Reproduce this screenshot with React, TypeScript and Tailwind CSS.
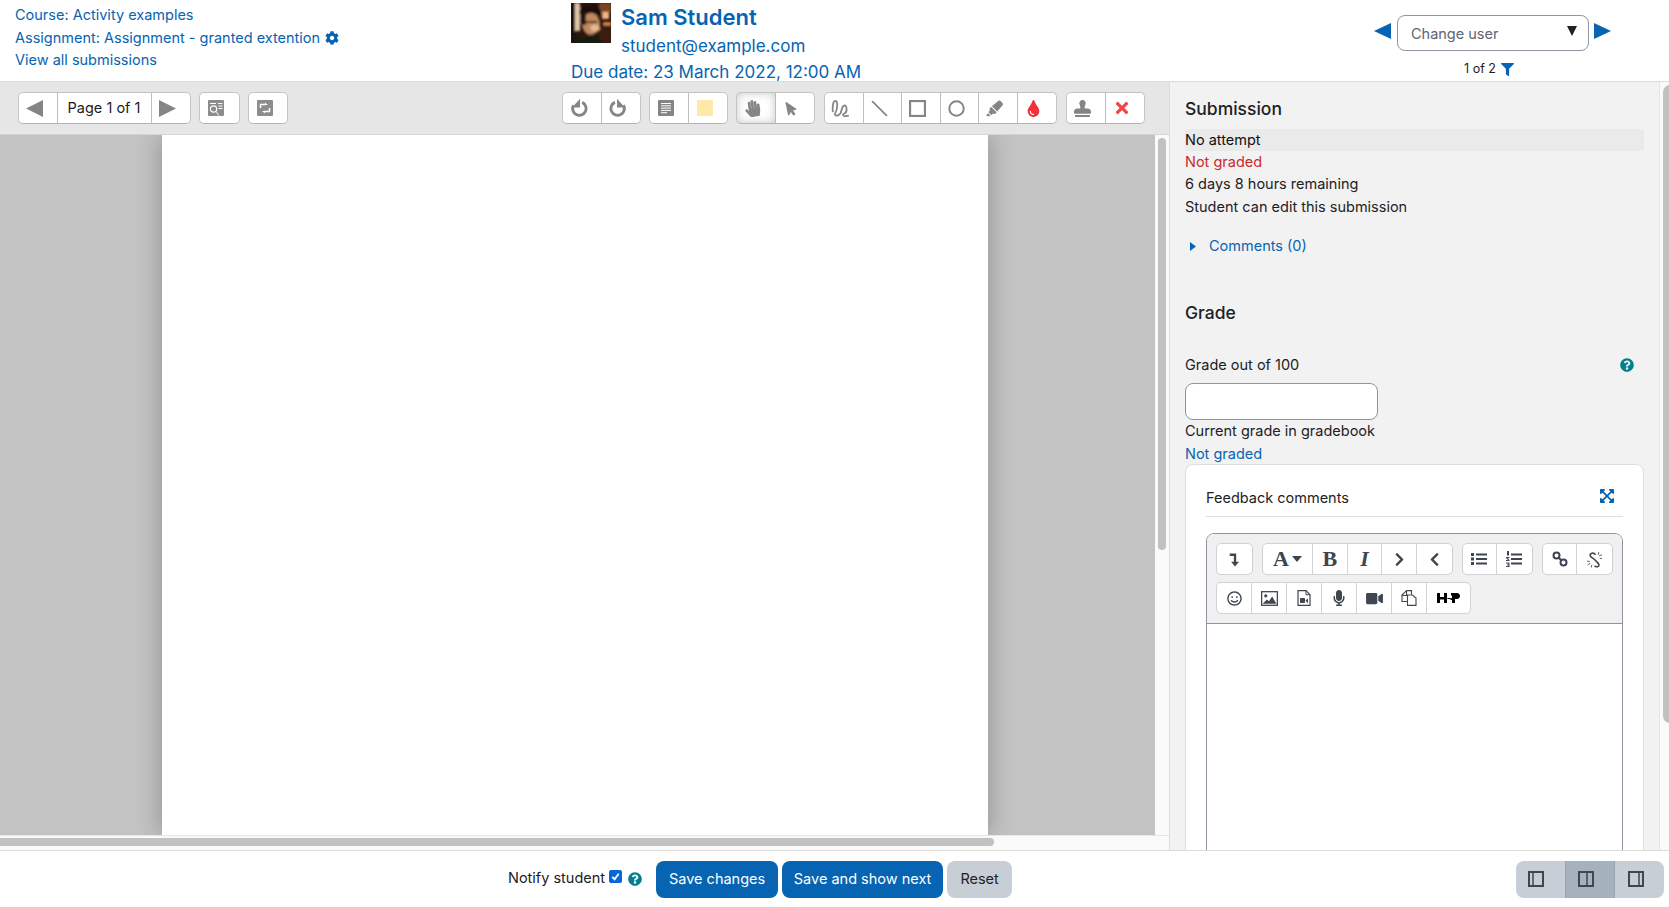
import React from "react";
import {
  FaCog,
  FaQuestionCircle,
  FaFilter,
  FaHandPaper,
  FaMousePointer,
  FaHighlighter,
  FaTint,
  FaStamp,
  FaTimes,
  FaExpandArrowsAlt,
  FaRegSmile,
  FaMicrophone,
  FaVideo,
  FaChevronRight,
  FaChevronLeft,
} from "react-icons/fa";

const font = "font-['Inter','Liberation_Sans',sans-serif]";

function Tri({ dir, className }: { dir: "l" | "r"; className: string }) {
  return (
    <svg viewBox="0 0 16 16" preserveAspectRatio="none" className={className} fill="currentColor">
      <polygon points={dir === "l" ? "16,0 16,16 0,8" : "0,0 0,16 16,8"} />
    </svg>
  );
}

function Avatar() {
  return (
    <svg viewBox="0 0 40 40" className="w-10 h-10 shrink-0">
      <defs>
        <filter id="av-blur">
          <feGaussianBlur stdDeviation="0.8" />
        </filter>
      </defs>
      <rect width="40" height="40" fill="#2a1610" />
      <g filter="url(#av-blur)">
        <rect x="0" y="0" width="4" height="40" fill="#1a0e0c" />
        <rect x="4" y="0" width="5" height="28" fill="#e0c8a8" />
        <rect x="28" y="0" width="12" height="9" fill="#7a4424" />
        <rect x="31" y="9" width="7" height="7" fill="#f4b488" />
        <rect x="32" y="19" width="8" height="4" fill="#d08040" />
        <rect x="28" y="25" width="12" height="15" fill="#3a1a10" />
        <ellipse cx="19" cy="9" rx="11" ry="7" fill="#1c1008" />
        <ellipse cx="20" cy="21" rx="9" ry="11" fill="#c08a60" />
        <rect x="10" y="10" width="5" height="12" fill="#241408" />
        <ellipse cx="24" cy="25" rx="5" ry="3.500" fill="#e4b890" />
        <rect x="15" y="18" width="11" height="2" fill="#4a2c18" />
        <ellipse cx="17" cy="41" rx="15" ry="8" fill="#141a10" />
      </g>
    </svg>
  );
}

function PdfGroup({ children, className = "" }: { children: React.ReactNode; className?: string }) {
  return (
    <div className={`flex h-8 rounded-[5px] bg-white border border-[#c4c4c4] border-b-[#b4b4b4] divide-x divide-[#bdbdbd] overflow-hidden ${className}`}>
      {children}
    </div>
  );
}

function PdfBtn({ children, className = "" }: { children: React.ReactNode; className?: string }) {
  return <div className={`w-[38.5px] pr-[6px] flex items-center justify-center text-[#858585] ${className}`}>{children}</div>;
}

function Stroke({ children, size = "w-[17px] h-[17px]" }: { children: React.ReactNode; size?: string }) {
  return (
    <svg viewBox="0 0 16 16" className={`${size} shrink-0`} fill="none" stroke="currentColor" strokeWidth="1.7">
      {children}
    </svg>
  );
}

function PdfToolbar() {
  return (
    <div className="h-[53px] flex items-center bg-[#e6e6e6] border-b border-[#d4d4d4] shrink-0">
      <PdfGroup className="ml-[18px]">
        <PdfBtn>
          <Tri dir="l" className="w-[17px] h-[17px]" />
        </PdfBtn>
        <div className="w-[94px] flex items-center justify-center text-[14.5px] text-[#1d2125]">Page 1 of 1</div>
        <PdfBtn>
          <Tri dir="r" className="w-[17px] h-[17px]" />
        </PdfBtn>
      </PdfGroup>
      <PdfGroup className="ml-2">
        <PdfBtn>
          <svg viewBox="0 0 16 16" className="w-4 h-4 shrink-0">
            <rect width="16" height="16" rx="1" fill="#8c8c8c" />
            <circle cx="5.500" cy="9" r="3.200" fill="none" stroke="#fff" strokeWidth="1.200" />
            <path d="M8 11.500l3 4M10 3.500h4.500M10.500 6h4M10.500 8.500h4M2 3.500h6" stroke="#fff" strokeWidth="1" />
          </svg>
        </PdfBtn>
      </PdfGroup>
      <PdfGroup className="ml-2">
        <PdfBtn>
          <svg viewBox="0 0 16 16" className="w-4 h-4 shrink-0">
            <rect width="16" height="16" rx="1" fill="#8c8c8c" />
            <path d="M3.500 8V4.500h5M12.500 8v3.500h-5" fill="none" stroke="#fff" strokeWidth="1.500" />
            <path d="M8 2.500L11 5H8zM8 13.500L5 11h3z" fill="#fff" />
          </svg>
        </PdfBtn>
      </PdfGroup>

      <PdfGroup className="ml-[274px]">
        <PdfBtn>
          <Stroke size="w-[20px] h-[20px]">
            <path d="M10.500 3.500A5.400 5.400 0 1 1 3.600 5.800" strokeWidth="2.300" />
            <path d="M8.800 0.500v7H2.500z" fill="currentColor" stroke="none" />
          </Stroke>
        </PdfBtn>
        <PdfBtn>
          <Stroke size="w-[20px] h-[20px]">
            <path d="M5.500 3.500A5.400 5.400 0 1 0 12.400 5.800" strokeWidth="2.300" />
            <path d="M7.200 0.500v7h6.300z" fill="currentColor" stroke="none" />
          </Stroke>
        </PdfBtn>
      </PdfGroup>
      <PdfGroup className="ml-2">
        <PdfBtn>
          <svg viewBox="0 0 16 16" className="w-4 h-4 shrink-0">
            <rect width="16" height="16" rx="1" fill="#858585" />
            <path d="M3 3.500h10M3 5.800h10M3 8.100h10M3 10.400h10M3 12.700h6" stroke="#fff" strokeWidth="1" />
          </svg>
        </PdfBtn>
        <PdfBtn>
          <span className="w-4 h-4 shrink-0 bg-[#ffe7a8]" />
        </PdfBtn>
      </PdfGroup>
      <PdfGroup className="ml-2">
        <PdfBtn className="shadow-[inset_0_0_10px_rgba(0,0,0,0.22)]">
          <FaHandPaper className="w-[17px] h-[17px] shrink-0 rotate-[-8deg]" />
        </PdfBtn>
        <PdfBtn>
          <FaMousePointer className="w-[15px] h-[15px] shrink-0 -rotate-12" />
        </PdfBtn>
      </PdfGroup>
      <PdfGroup className="ml-[9px]">
        <PdfBtn>
          <Stroke size="w-[19px] h-[19px]">
            <path d="M1.500 11C1 5 2 1.500 3.800 1.500 6 1.500 5.500 9 3.500 12 2.500 14.500 6 15 8 12 9 10 9 6 11 5.500 13.500 5 14 11 11.500 12 9.500 13 9.500 14.500 12 14.500L15 14" strokeWidth="1.500" />
          </Stroke>
        </PdfBtn>
        <PdfBtn>
          <Stroke>
            <path d="M1 1l14 14" strokeWidth="1.600" />
          </Stroke>
        </PdfBtn>
        <PdfBtn>
          <Stroke>
            <rect x="1" y="1" width="14" height="14" strokeWidth="2" />
          </Stroke>
        </PdfBtn>
        <PdfBtn>
          <Stroke>
            <circle cx="8" cy="8" r="6.800" strokeWidth="1.900" />
          </Stroke>
        </PdfBtn>
        <PdfBtn>
          <FaHighlighter className="w-[17px] h-[17px] shrink-0" />
        </PdfBtn>
        <PdfBtn>
          <FaTint className="w-[17px] h-[17px] shrink-0 text-[#f0323c]" />
        </PdfBtn>
      </PdfGroup>
      <PdfGroup className="ml-[9px]">
        <PdfBtn>
          <FaStamp className="w-[17px] h-[17px] shrink-0" />
        </PdfBtn>
        <PdfBtn>
          <FaTimes className="w-[18px] h-[18px] shrink-0 text-[#f04646]" />
        </PdfBtn>
      </PdfGroup>
    </div>
  );
}

function AttoGroup({ children, className = "" }: { children: React.ReactNode; className?: string }) {
  return (
    <div className={`flex h-8 rounded-[5px] bg-white border border-[#d2d2d2] divide-x divide-[#d2d2d2] overflow-hidden ${className}`}>
      {children}
    </div>
  );
}

function AttoBtn({ children, className = "w-[35px]" }: { children: React.ReactNode; className?: string }) {
  return <div className={`flex items-center justify-center text-[#3f4650] ${className}`}>{children}</div>;
}

function EditorToolbar() {
  return (
    <div className="h-[90px] bg-[#f0f0f0] border-b border-[#8f959e] px-[9px] pt-[9px] rounded-t-[7px] shrink-0">
      <div className="flex">
        <AttoGroup>
          <AttoBtn>
            <svg viewBox="0 0 16 16" className="w-[17px] h-[17px]" fill="none" stroke="currentColor" strokeWidth="2.200">
              <path d="M3.500 3.500h5v8" />
              <path d="M4.800 10h7.400l-3.700 4.500z" fill="currentColor" stroke="none" />
            </svg>
          </AttoBtn>
        </AttoGroup>
        <AttoGroup className="ml-[9px]">
          <AttoBtn className="w-[51px]">
            <span className="font-['Liberation_Serif',serif] font-bold text-[22px] leading-none">A</span>
            <svg viewBox="0 0 10 6" className="w-[10px] h-[6px] ml-[3px]" fill="currentColor">
              <polygon points="0,0 10,0 5,6" />
            </svg>
          </AttoBtn>
          <AttoBtn>
            <span className="font-['Liberation_Serif',serif] font-bold text-[22px] leading-none">B</span>
          </AttoBtn>
          <AttoBtn>
            <span className="font-['Liberation_Serif',serif] font-bold italic text-[22px] leading-none">I</span>
          </AttoBtn>
          <AttoBtn>
            <FaChevronRight className="w-[15px] h-[15px]" />
          </AttoBtn>
          <AttoBtn>
            <FaChevronLeft className="w-[15px] h-[15px]" />
          </AttoBtn>
        </AttoGroup>
        <AttoGroup className="ml-[9px]">
          <AttoBtn>
            <svg viewBox="0 0 16 16" className="w-4 h-4" fill="currentColor">
              <path d="M5 2.500h11v2H5zM5 7h11v2H5zM5 11.500h11v2H5zM0 2h3v3H0zM0 6.500h3v3H0zM0 11h3v3H0z" />
            </svg>
          </AttoBtn>
          <AttoBtn>
            <svg viewBox="0 0 16 16" className="w-4 h-4" fill="currentColor">
              <path d="M5 2.500h11v2H5zM5 7h11v2H5zM5 11.500h11v2H5zM1 0h2v4.500H1zM0 6h3.500v1H1.800l1.700 2v1H0V9h2L0 7zM0 11.500h3.500V16H0v-1h2.300v-.7H1v-.8h1.300v-.9H0z" />
            </svg>
          </AttoBtn>
        </AttoGroup>
        <AttoGroup className="ml-[9px]">
          <AttoBtn>
            <svg viewBox="0 0 16 16" className="w-4 h-4" fill="none" stroke="currentColor" strokeWidth="2">
              <circle cx="4.500" cy="4.500" r="3" />
              <circle cx="11.500" cy="11.500" r="3" />
              <path d="M6.500 6.500l3 3" />
            </svg>
          </AttoBtn>
          <AttoBtn>
            <svg viewBox="0 0 16 16" className="w-[17px] h-[17px]" fill="none" stroke="currentColor" strokeWidth="1.500">
              <path d="M9 3.500C7 1 3.500 2 4 4.500c.3 1.500 3 2 4.500 4s4.500 3 3.500 5.500c-1 1.500-3 .8-4 0" />
              <path d="M12 1l-.5 2.500M15 3.500l-2.500 1M15 7h-2M1 9.500l2.500.5M1.500 13L4 11.500M5 15.500l.5-2.500" strokeWidth="0.800" />
            </svg>
          </AttoBtn>
        </AttoGroup>
      </div>
      <div className="flex mt-[7px]">
        <AttoGroup>
          <AttoBtn>
            <FaRegSmile className="w-[15px] h-[15px]" />
          </AttoBtn>
          <AttoBtn>
            <svg viewBox="0 0 16 14" className="w-[17px] h-[15px]">
              <rect x="0.600" y="0.600" width="14.800" height="12.800" fill="none" stroke="currentColor" strokeWidth="1.200" />
              <circle cx="4.500" cy="4.500" r="1.500" fill="currentColor" />
              <path d="M1.500 12l4-4 2 1.500 3-4.500 4 7z" fill="currentColor" />
            </svg>
          </AttoBtn>
          <AttoBtn>
            <svg viewBox="0 0 14 16" className="w-[14px] h-4">
              <path d="M1 .700h8l4 4v10.600H1z" fill="none" stroke="currentColor" strokeWidth="1.200" />
              <path d="M9 .700v4h4" fill="none" stroke="currentColor" strokeWidth="1" />
              <rect x="3" y="8" width="5" height="5" rx="0.800" fill="currentColor" />
              <path d="M8.500 10.500l2.500-2v5z" fill="currentColor" />
            </svg>
          </AttoBtn>
          <AttoBtn>
            <FaMicrophone className="w-[14px] h-[16px]" />
          </AttoBtn>
          <AttoBtn>
            <FaVideo className="w-[17px] h-[15px]" />
          </AttoBtn>
          <AttoBtn>
            <svg viewBox="0 0 16 16" className="w-4 h-4" fill="none" stroke="currentColor" strokeWidth="1.100">
              <path d="M5.500 0.600h5v4" />
              <path d="M5.500 0.600L1 5v6.500h5.500" />
              <path d="M1 5.500h4.500v-5" />
              <path d="M6.500 5h5l3.500 3v7.400H6.500z" fill="#fff" />
            </svg>
          </AttoBtn>
          <AttoBtn className="w-[43px]">
            <svg viewBox="0 0 24 12" className="w-6 h-3 text-black" fill="currentColor">
              <path d="M0 1h3v4h4V1h3v10H7V7.500H3V11H0zM14 1h6c4 0 4 6 0 6h-2v4h-3V8h-1.500l-.5-1.500 2-.5V3.500H14z" />
              <path d="M10.500 6h3v1h-3z" />
            </svg>
          </AttoBtn>
        </AttoGroup>
      </div>
    </div>
  );
}

function GradePanel() {
  return (
    <div className="flex-1 min-w-0 bg-[#f2f2f2] overflow-hidden pl-[15px] pr-[15px] pt-[16px] text-[14.5px] leading-[22.5px] text-[#1d2125]">
      <h3 className="text-[17.5px] leading-[22.5px] font-medium">Submission</h3>
      <div className="mt-[8px] bg-[#eaeaea] h-[22px] text-[#111]">No attempt</div>
      <div className="text-[#ca2b2b]">Not graded</div>
      <div>6 days 8 hours remaining</div>
      <div>Student can edit this submission</div>
      <div className="mt-[17px] flex items-center h-[22px] text-[#0664b3]">
        <Tri dir="r" className="w-[6px] h-[9px] ml-[5px]" />
        <span className="ml-[13px]">Comments (0)</span>
      </div>
      <h3 className="mt-[45px] text-[17.5px] leading-[22.5px] font-medium">Grade</h3>
      <div className="mt-[29px] flex items-center justify-between pr-[10px]">
        <span>Grade out of 100</span>
        <FaQuestionCircle className="w-[14px] h-[14px] text-[#007f8c]" />
      </div>
      <div className="mt-[7px] w-[193px] h-[37px] bg-white border border-[#8f959e] rounded-lg" />
      <div>Current grade in gradebook</div>
      <div className="leading-[21.5px] text-[#0664b3]">Not graded</div>
      <div className="bg-white border border-[#dedede] rounded-lg h-[420px] px-5">
        <div className="h-[52px] border-b border-[#dedede] flex items-center justify-between pr-[8px] pt-[15px]">
          <span>Feedback comments</span>
          <FaExpandArrowsAlt className="w-4 h-4 -mt-[4px] text-[#0664b3]" />
        </div>
        <div className="mt-4 border border-[#8f959e] rounded-t-lg bg-white h-[400px]">
          <EditorToolbar />
        </div>
      </div>
    </div>
  );
}

export default function App() {
  return (
    <div className={`h-[907px] w-[1669px] overflow-hidden flex flex-col bg-white ${font}`}>
      <header className="h-[82px] shrink-0 border-b border-[#dcdcdc] flex overflow-hidden text-[#0664b3]">
        <div className="w-[571px] pl-[15px] pt-[4px] text-[14.5px] leading-[22.5px]">
          <div>Course: Activity examples</div>
          <div className="flex items-center">
            Assignment: Assignment - granted extention
            <FaCog className="w-[14px] h-[14px] ml-[5px]" />
          </div>
          <div>View all submissions</div>
        </div>
        <div className="w-[803px] pt-[3px]">
          <div className="flex h-[56px]">
            <Avatar />
            <div className="ml-[10px] pt-[1px]">
              <div className="text-[22px] leading-[27px] font-semibold">Sam Student</div>
              <div className="text-[17px] leading-[27px] mt-[2px]">student@example.com</div>
            </div>
          </div>
          <div className="text-[17px] leading-[18px] mt-[4px]">Due date: 23 March 2022, 12:00 AM</div>
        </div>
        <div className="flex-1 pt-[15px]">
          <div className="flex items-center">
            <Tri dir="l" className="w-[17px] h-[16px] -mt-[4px]" />
            <div className="ml-[6px] w-[192px] h-[36px] rounded-lg border border-[#8f959e] bg-white flex items-center justify-between pl-[13px] pr-[11px] text-[14.5px] text-[#5d6570]">
              <span className="mt-[1px]">Change user</span>
              <svg viewBox="0 0 10 10" className="w-[10px] h-[10px] text-[#1d2125] -mt-[4px]" fill="currentColor">
                <polygon points="0,0 10,0 5,10" />
              </svg>
            </div>
            <Tri dir="r" className="w-[17px] h-[16px] ml-[5px] -mt-[4px]" />
          </div>
          <div className="mt-[9px] flex items-center justify-center w-[230px] text-[12.5px] text-[#1d2125]">
            1 of 2
            <FaFilter className="w-[13px] h-[13px] ml-[5px] text-[#0664b3]" />
          </div>
        </div>
      </header>

      <main className="flex-1 min-h-0 flex">
        <div className="w-[1170px] shrink-0 flex flex-col border-r border-[#dcdcdc]">
          <PdfToolbar />
          <div className="flex-1 min-h-0 flex">
            <div className="flex-1 bg-[#c3c3c3] overflow-hidden pl-[162px]">
              <div className="w-[826px] h-full bg-white shadow-[0_0_24px_rgba(0,0,0,0.28)]" />
            </div>
            <div className="w-[14px] bg-[#fafafa] pt-[3px] pl-[3px]">
              <div className="w-[8px] h-[412px] rounded-full bg-[#c1c1c1]" />
            </div>
          </div>
          <div className="h-[15px] shrink-0 bg-[#fafafa] border-t border-[#e6e6e6] pt-[2px]">
            <div className="w-[994px] h-[8px] rounded-r-full bg-[#c1c1c1]" />
          </div>
        </div>
        <GradePanel />
        <div className="w-[10px] shrink-0 bg-[#fafafa] border-l border-[#e6e6e6] pt-[3px] pl-[3px]">
          <div className="w-[7px] h-[638px] rounded-l-full bg-[#c1c1c1]" />
        </div>
      </main>

      <footer className="h-[57px] shrink-0 border-t border-[#dcdcdc] flex items-center pl-[508px] pr-[5px] text-[14.5px] text-[#1d2125]">
        <span className="-mt-[2px]">Notify student</span>
        <span className="ml-[4px] -mt-[5px] w-[13px] h-[13px] rounded-[2px] bg-[#0a66d8] flex items-center justify-center">
          <svg viewBox="0 0 12 12" className="w-[11px] h-[11px]" fill="none" stroke="#fff" strokeWidth="2">
            <path d="M2.500 6.500l2.500 2.500 4.500-6" />
          </svg>
        </span>
        <FaQuestionCircle className="ml-[6px] w-[14px] h-[14px] text-[#007f8c]" />
        <div className="ml-[14px] w-[122px] h-[37px] rounded-lg bg-[#0664b3] text-white flex items-center justify-center">Save changes</div>
        <div className="ml-[4px] w-[161px] h-[37px] rounded-lg bg-[#0664b3] text-white flex items-center justify-center">Save and show next</div>
        <div className="ml-[4px] w-[65px] h-[37px] rounded-lg bg-[#c8ced5] flex items-center justify-center">Reset</div>
        <div className="ml-auto w-[148px] h-[37px] rounded-lg overflow-hidden flex bg-[#c8ced5]">
          {[0, 1, 2].map((i) => (
            <div key={i} className={`flex-1 pr-[8px] flex items-center justify-center ${i === 1 ? "bg-[#a5b1bb] border-x border-[#98a5b0]" : ""}`}>
              <svg viewBox="0 0 16 16" className="w-4 h-4" fill="none" stroke="#3f4650" strokeWidth="2">
                <rect x="1" y="1" width="14" height="14" />
                <path d={i === 0 ? "M5 1v14" : i === 1 ? "M9 1v14" : "M11 1v14"} strokeWidth="1.500" />
              </svg>
            </div>
          ))}
        </div>
      </footer>
    </div>
  );
}
